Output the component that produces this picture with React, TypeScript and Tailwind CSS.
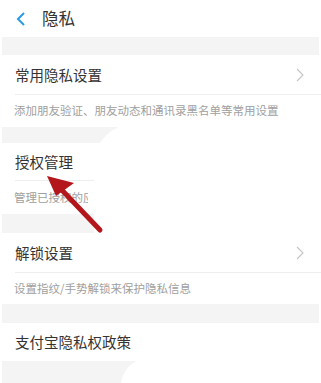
import { ReactNode } from "react";

const font = { fontFamily: '"Noto Sans CJK SC", "Noto Sans", sans-serif' };

function Chevron() {
  return (
    <svg width="9" height="14" viewBox="0 0 9 14" className="mr-[16px]">
      <path d="M1 1l6 6-6 6" fill="none" stroke="#c4c4c4" strokeWidth="1.1" />
    </svg>
  );
}

function Row({ title, arrow, line, h = "h-[40px]" }: { title: string; arrow?: boolean; line?: boolean; h?: string }) {
  return (
    <div className="bg-white pl-[15px]">
      <div className={`${h} flex items-center justify-between ${line ? "border-b border-[#eeeeee]" : ""}`}>
        <span className="text-[14.5px] text-[#333333]">{title}</span>
        {arrow && <Chevron />}
      </div>
    </div>
  );
}

function Desc({ children, h = "h-[32px]" }: { children: ReactNode; h?: string }) {
  return (
    <div className={`${h} flex items-center pl-[14px] text-[11.5px] text-[#a0a0a0] bg-white whitespace-nowrap`}>
      {children}
    </div>
  );
}

const Gap = ({ h }: { h: string }) => <div className={`${h} bg-[#f4f4f4] mx-[2px]`} />;

export default function App() {
  return (
    <div className="relative w-[321px] h-[383px] overflow-hidden bg-white" style={font}>
      <div className="h-[37px] flex items-center">
        <svg width="12" height="16" viewBox="0 0 12 16" className="ml-[15px]">
          <path d="M9 2L3 8l6 6" fill="none" stroke="#2a9ae6" strokeWidth="2" />
        </svg>
        <span className="ml-[15px] text-[16.5px] text-[#333333]">隐私</span>
      </div>
      <Gap h="h-[18px]" />
      <Row title="常用隐私设置" arrow line />
      <Desc>添加朋友验证、朋友动态和通讯录黑名单等常用设置</Desc>
      <Gap h="h-[16px]" />
      <Row title="授权管理" line h="h-[38px]" />
      <Desc h="h-[33px]">管理已授权的应用</Desc>
      <Gap h="h-[19px]" />
      <Row title="解锁设置" arrow line />
      <Desc h="h-[31px]">设置指纹/手势解锁来保护隐私信息</Desc>
      <Gap h="h-[19px]" />
      <Row title="支付宝隐私权政策" h="h-[38px]" />
      <Gap h="h-[30px]" />

      {/* white cut-out over the right side */}
      <div className="absolute left-[94px] top-[124px] w-[260px] h-[118px] bg-white rounded-tl-[40px]" />
      <div className="absolute left-[88px] top-[183px] w-[40px] h-[30px] bg-white" />
      <div className="absolute left-[121px] top-[358px] w-[220px] h-[40px] bg-white rounded-tl-[28px]" />

      <svg className="absolute left-0 top-0" width="321" height="383">
        <line x1="100" y1="230" x2="58" y2="186" stroke="#b3161b" strokeWidth="5" strokeLinecap="round" />
        <path d="M47 176L74 183L56 196Z" fill="#b3161b" />
      </svg>
    </div>
  );
}
